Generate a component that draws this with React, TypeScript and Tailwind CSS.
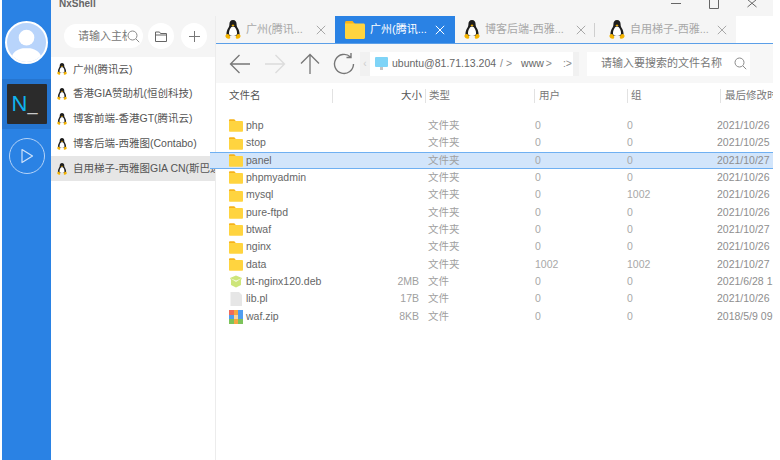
import React from "react";

const Tux = ({ s = 12 }: { s?: number }) => (
  <svg width={s} height={s * 1.2} viewBox="0 0 20 24" className="shrink-0">
    <path d="M10 0c-3 0-4.5 2.4-4.5 5.2 0 2-.4 3-1.6 5C2.600 12.400 1.800 15 1.800 17.500c0 1.500 1 2.500 2.700 2.500h11c1.700 0 2.700-1 2.700-2.500 0-2.500-.8-5.100-2.100-7.300-1.200-2-1.600-3-1.600-5C14.500 2.400 13 0 10 0z" fill="#1d1d1d" />
    <path d="M10 8c-2.700 0-5 4.400-5 8.500 0 2 1 3.500 5 3.500s5-1.500 5-3.500C15 12.400 12.700 8 10 8z" fill="#fff" />
    <path d="M8 6.500 10 5.500l2 1-2 1.500z" fill="#f5b400" />
    <path d="M0.500 20c0-1.600 1.600-2.600 3-2.600 1.200 0 2.500 1.800 3 3.400.4 1.400-.6 2.700-2 2.700-1.900 0-4-1.700-4-3.500zM19.500 20c0-1.600-1.600-2.600-3-2.600-1.200 0-2.500 1.800-3 3.400-.4 1.400.6 2.700 2 2.700 1.900 0 4-1.700 4-3.500z" fill="#f5b400" />
  </svg>
);

const Folder = ({ w = 14, h = 13 }: { w?: number; h?: number }) => (
  <svg width={w} height={h} viewBox="0 0 20 18" className="shrink-0">
    <path d="M0 1.500C0 .7.700 0 1.500 0h6l2.500 3H0z" fill="#f6b21a" />
    <path d="M0 2.500h18.500c.8 0 1.500.7 1.500 1.500v12.500c0 .8-.7 1.500-1.500 1.500h-17C.7 18 0 17.300 0 16.500z" fill="#ffd43f" />
  </svg>
);

const Close = ({ c }: { c: string }) => (
  <svg width="10" height="10" viewBox="0 0 10 10" className="shrink-0">
    <path d="M.8.800l8.400 8.400M9.200.800.800 9.200" stroke={c} strokeWidth="1" fill="none" />
  </svg>
);

const Search = () => (
  <svg width="13" height="13" viewBox="0 0 13 13" className="shrink-0">
    <circle cx="5.500" cy="5.500" r="4.500" stroke="#8a8a8a" strokeWidth="1" fill="none" />
    <path d="M9 9l3.200 3.200" stroke="#8a8a8a" strokeWidth="1" />
  </svg>
);

const hosts = ["广州(腾讯云)", "香港GIA赞助机(恒创科技)", "博客前端-香港GT(腾讯云)", "博客后端-西雅图(Contabo)", "自用梯子-西雅图GIA CN(斯巴达)"];

type R = { n: string; s?: string; t: string; u: string; g: string; d: string; k: "d" | "deb" | "f" | "zip"; sel?: boolean };
const rows: R[] = [
  { n: "php", t: "文件夹", u: "0", g: "0", d: "2021/10/26", k: "d" },
  { n: "stop", t: "文件夹", u: "0", g: "0", d: "2021/10/25", k: "d" },
  { n: "panel", t: "文件夹", u: "0", g: "0", d: "2021/10/27", k: "d", sel: true },
  { n: "phpmyadmin", t: "文件夹", u: "0", g: "0", d: "2021/10/26", k: "d" },
  { n: "mysql", t: "文件夹", u: "0", g: "1002", d: "2021/10/26", k: "d" },
  { n: "pure-ftpd", t: "文件夹", u: "0", g: "0", d: "2021/10/26", k: "d" },
  { n: "btwaf", t: "文件夹", u: "0", g: "0", d: "2021/10/27", k: "d" },
  { n: "nginx", t: "文件夹", u: "0", g: "0", d: "2021/10/26", k: "d" },
  { n: "data", t: "文件夹", u: "1002", g: "1002", d: "2021/10/27", k: "d" },
  { n: "bt-nginx120.deb", s: "2MB", t: "文件", u: "0", g: "0", d: "2021/6/28 1", k: "deb" },
  { n: "lib.pl", s: "17B", t: "文件", u: "0", g: "0", d: "2021/10/26", k: "f" },
  { n: "waf.zip", s: "8KB", t: "文件", u: "0", g: "0", d: "2018/5/9 09", k: "zip" },
];

const FileIcon = ({ k }: { k: R["k"] }) => {
  if (k === "d") return <Folder />;
  if (k === "deb")
    return (
      <svg width="14" height="13" viewBox="0 0 14 13" className="shrink-0">
        <path d="M1 3l6-2.500L13 3l-1 2v5l-5 2.500L2 10V5z" fill="#cde57a" />
        <path d="M1 3l6 2.500L13 3 7 7z" fill="#fff" opacity=".75" />
      </svg>
    );
  if (k === "f")
    return (
      <svg width="14" height="14" viewBox="0 0 14 14" className="shrink-0">
        <path d="M1.500 0H10l3 3v11H1.500z" fill="#e6e6e6" />
      </svg>
    );
  return (
    <svg width="14" height="14" viewBox="0 0 14 14" className="shrink-0">
      <rect width="14" height="14" rx="1" fill="#4f9df0" />
      <rect x="0" width="5" height="5" fill="#ef6a5a" />
      <rect x="9" width="5" height="5" fill="#4f9df0" />
      <rect x="0" y="9" width="14" height="5" fill="#7cc35a" />
      <rect x="5" width="4" height="14" fill="#f5a742" />
      <rect x="5" y="5" width="4" height="4" fill="#f8d79a" />
    </svg>
  );
};

const Tab = ({ label, w, active, sep }: { label: string; w: string; active?: boolean; sep?: boolean }) => (
  <div className={`${w} h-[27px] flex items-center shrink-0 ${active ? "bg-[#2a82e4] pl-[9px] pr-[9px] border border-[#2a82e4]" : "pl-[9px] pr-[9px]"}`}>
    {active ? <Folder w={20} h={20} /> : <Tux s={16} />}
    <span className={`ml-[5px] flex-1 text-[11px] whitespace-nowrap overflow-hidden ${active ? "text-white" : "text-[#a8a8a8]"}`}>{label}</span>
    <Close c={active ? "#ffffff" : "#a8a8a8"} />
    {sep && <div className="w-px h-[14px] bg-[#cfcfcf] ml-[8px] -mr-[4px]" />}
  </div>
);

const Sep = () => <div className="w-px h-[14px] bg-[#e2e2e2]" />;

export default function App() {
  return (
    <div className="w-[780px] h-[460px] bg-white overflow-hidden flex pl-[2px] pr-[7px] text-[#555]" style={{ fontFamily: '"Liberation Sans","Noto Sans CJK SC",sans-serif' }}>
      {/* Rail */}
      <div className="w-[49px] h-full bg-[#2a82e4] flex flex-col items-center shrink-0">
        <div className="mt-[21px] w-[43px] h-[43px] rounded-full border-2 border-white bg-[#b8d4fb] overflow-hidden shrink-0">
          <svg viewBox="0 0 40 40" className="w-full h-full">
            <circle cx="20" cy="15" r="8" fill="#fff" />
            <path d="M4 40c0-10 7-13 12-14h8c5 1 12 4 12 14z" fill="#fff" />
          </svg>
        </div>
        <div className="mt-[15px] w-full h-[50px] bg-[#2575d0] flex items-center justify-center shrink-0">
          <div className="w-[40px] h-[40px] bg-[#2b2b2b] rounded-[1px] flex items-center pl-[5px] text-[22px] leading-none">
            <span className="text-[#0fb3f0]">N</span>
            <span className="text-[#c9c9c9] text-[18px]">_</span>
          </div>
        </div>
        <div className="mt-[9px] w-[36px] h-[36px] rounded-full border border-[#b5d3f7] flex items-center justify-center shrink-0">
          <svg width="14" height="16" viewBox="0 0 14 16">
            <path d="M2 1.500 12.500 8 2 14.500z" fill="none" stroke="#cfe2fa" strokeWidth="1.200" strokeLinejoin="round" />
          </svg>
        </div>
      </div>

      {/* Window */}
      <div className="flex-1 min-w-0 flex flex-col">
        {/* Title row */}
        <div className="h-[16px] bg-[#f5f5f5] flex items-start justify-between shrink-0">
          <span className="ml-[8px] -mt-[2px] text-[10px] font-bold text-[#666] leading-[12px]">NxShell</span>
          <div className="flex items-start gap-[28px] pr-[16px]">
            <svg width="10" height="10" viewBox="0 0 10 10"><path d="M0 3.500h10" stroke="#666" /></svg>
            <svg width="10" height="10" viewBox="0 0 10 10"><path d="M.5-1v9.500h9V-1" stroke="#666" fill="none" /></svg>
            <svg width="10" height="10" viewBox="0 0 10 10"><path d="M.5-.5 9.500 7M9.500-.5.5 7" stroke="#666" fill="none" /></svg>
          </div>
        </div>

        <div className="flex-1 flex min-h-0">
          {/* Hosts */}
          <div className="w-[165px] shrink-0 flex flex-col border-r border-[#ececec]">
            <div className="h-[41px] bg-[#f5f5f5] flex items-start pl-[13px] pt-[8px] shrink-0">
              <div className="w-[79px] h-[24px] rounded-full bg-white flex items-center pl-[14px] pr-[3px] shrink-0">
                <span className="text-[11px] text-[#777] flex-1 whitespace-nowrap overflow-hidden">请输入主机</span>
                <Search />
              </div>
              <div className="ml-[5px] w-[26px] h-[26px] -mt-px rounded-full bg-white flex items-center justify-center shrink-0">
                <svg width="12" height="11" viewBox="0 0 12 11">
                  <path d="M.5 1h4l1 1.500h6v8H.5zM.5 4h11" stroke="#666" fill="none" />
                </svg>
              </div>
              <div className="ml-[7px] w-[26px] h-[26px] -mt-px rounded-full bg-white flex items-center justify-center shrink-0">
                <svg width="11" height="11" viewBox="0 0 11 11">
                  <path d="M5.500 0v11M0 5.500h11" stroke="#777" />
                </svg>
              </div>
            </div>
            <div className="flex-1 bg-white">
              {hosts.map((h, i) => (
                <div key={h} className={`h-[24.800px] flex items-center pl-[6px] overflow-hidden ${i === 4 ? "bg-[#e6e6e6]" : ""}`}>
                  <Tux s={10} />
                  <span className="ml-[6px] text-[10.500px] text-[#555] whitespace-nowrap">{h}</span>
                </div>
              ))}
            </div>
          </div>

          {/* Main */}
          <div className="flex-1 min-w-0 flex flex-col bg-white">
            {/* Tabs */}
            <div className="h-[28px] bg-[#f5f5f5] flex border-b border-[#5b9fe8] shrink-0">
              <Tab label="广州(腾讯..." w="w-[119px]" />
              <Tab label="广州(腾讯..." w="w-[120px]" active />
              <Tab label="博客后端-西雅..." w="w-[145px]" sep />
              <Tab label="自用梯子-西雅..." w="w-[136px]" />
              <div className="flex-1 bg-white" />
            </div>
            {/* Toolbar */}
            <div className="h-[39px] bg-[#f7f7f7] flex items-center pl-[13px] shrink-0">
              <svg width="22" height="20" viewBox="0 0 22 20" className="shrink-0">
                <path d="M21 10H1.500M10.500 1 1.500 10l9 9" stroke="#777" strokeWidth="1.300" fill="none" />
              </svg>
              <svg width="22" height="20" viewBox="0 0 22 20" className="ml-[13px] shrink-0">
                <path d="M1 10h19.500M11.500 1l9 9-9 9" stroke="#dcdcdc" strokeWidth="1.300" fill="none" />
              </svg>
              <svg width="20" height="22" viewBox="0 0 20 22" className="ml-[14px] shrink-0">
                <path d="M10 21V1.500M1 10.500l9-9 9 9" stroke="#777" strokeWidth="1.300" fill="none" />
              </svg>
              <svg width="24" height="22" viewBox="0 0 24 22" className="ml-[13px] shrink-0">
                <path d="M20.500 11a9.500 9.500 0 1 1-3-7M18 0v4.500h-4.500" stroke="#777" strokeWidth="1.400" fill="none" />
              </svg>
              <div className="ml-[3px] w-[10px] h-[24px] bg-[#f1f1f1] flex items-center justify-center text-[10px] text-[#ccc] shrink-0">‹</div>
              <div className="w-[209px] h-[24px] bg-white flex items-center pl-[5px] text-[10.500px] text-[#666] whitespace-nowrap overflow-hidden shrink-0">
                <svg width="13" height="14" viewBox="0 0 13 14" className="shrink-0">
                  <rect width="13" height="10" rx="1" fill="#7fd4f7" />
                  <rect x="5" y="10" width="3" height="3" fill="#c5c5c5" />
                </svg>
                <span className="ml-[4px]">ubuntu@81.71.13.204</span>
                <span className="ml-[4px] text-[#888]">/ &gt;</span>
                <span className="ml-[9px]">www</span>
                <span className="ml-[2px] text-[#888]">&gt;</span>
                <span className="ml-[11px] text-[#888]">:&gt;</span>
                <div className="flex-1 h-full bg-[#f1f1f1] ml-[1px]" />
              </div>
              <div className="ml-[8px] w-[163px] h-[24px] bg-white flex items-center pl-[14px] pr-[3px] shrink-0">
                <span className="flex-1 text-[11px] text-[#777] whitespace-nowrap">请输入要搜索的文件名称</span>
                <Search />
              </div>
            </div>
            {/* Header */}
            <div className="h-[26px] flex items-center text-[10.500px] text-[#555] shrink-0 whitespace-nowrap">
              <span className="ml-[13px] w-[103px]">文件名</span>
              <Sep />
              <span className="w-[92px] text-right pr-[3px] shrink-0">大小</span>
              <Sep />
              <span className="w-[108px] pl-[3px] shrink-0 text-[#777]">类型</span>
              <Sep />
              <span className="w-[92px] pl-[4px] shrink-0 text-[#777]">用户</span>
              <Sep />
              <span className="w-[92px] pl-[3px] shrink-0 text-[#777]">组</span>
              <Sep />
              <span className="pl-[4px] overflow-hidden flex-1 text-[#777]">最后修改时间</span>
            </div>
            <div className="h-[8px] shrink-0" />
            {/* Rows */}
            <div className="flex flex-col text-[10.500px] whitespace-nowrap">
              {rows.map((r) => (
                <div key={r.n} className={`h-[17.360px] flex items-center shrink-0 ${r.sel ? "bg-[#d2e5fb] border-y border-[#6fb0f2] ml-[-6px] pl-[6px]" : ""}`}>
                  <div className="ml-[13px] w-[17px] flex shrink-0"><FileIcon k={r.k} /></div>
                  <span className="w-[143px] text-[#666] shrink-0">{r.n}</span>
                  <span className="w-[30px] text-right text-[#a0a0a0] shrink-0">{r.s}</span>
                  <span className="ml-[9px] w-[107px] text-[#a0a0a0] shrink-0">{r.t}</span>
                  <span className="w-[92px] text-[#a8a8a8] shrink-0">{r.u}</span>
                  <span className="w-[90px] text-[#a8a8a8] shrink-0">{r.g}</span>
                  <span className="text-[#8e8e8e] overflow-hidden flex-1">{r.d}</span>
                </div>
              ))}
            </div>
          </div>
        </div>
      </div>
    </div>
  );
}
